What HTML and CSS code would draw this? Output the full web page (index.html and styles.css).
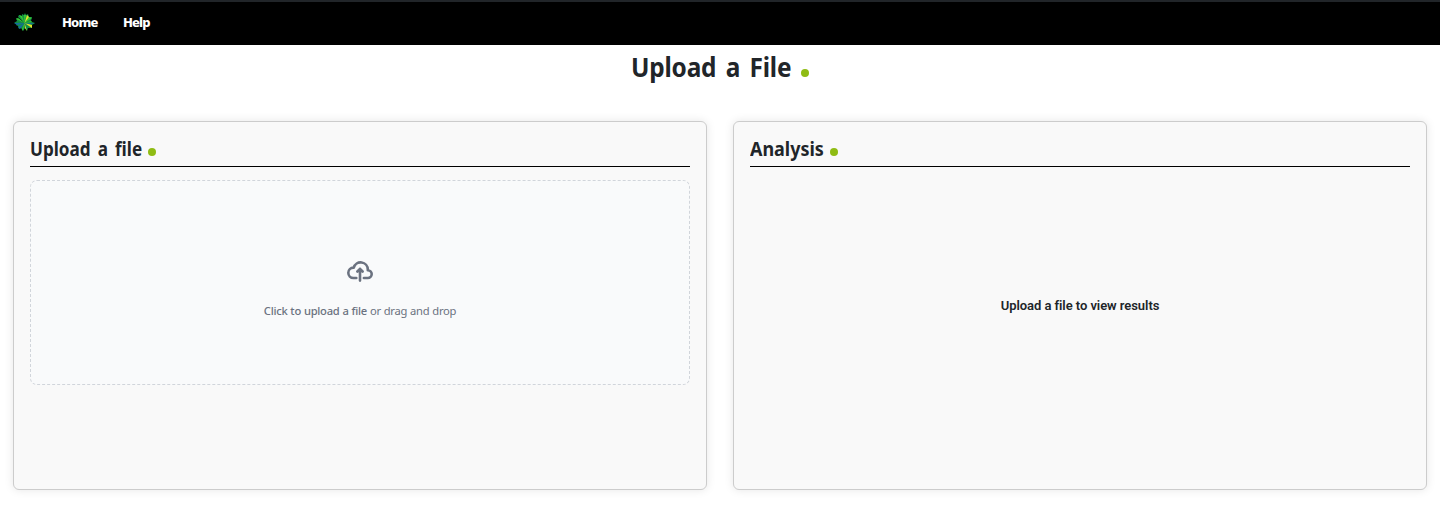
FILE: index.html
```html
<!DOCTYPE html>
<html lang="en">
<head>
<meta charset="utf-8">
<title>Upload a File</title>
<link rel="stylesheet" href="styles.css">
</head>
<body>
<nav class="navbar">
  <svg class="logo" viewBox="0 0 21 19" aria-hidden="true">
    <path fill="#138c45" d="M10.5 10 4 4 5 2 8 3 8 1 10 2 11 0 12 2 14 1 15 4 18 4 17 8 18 9 21 10 18 12 18 15 14 15 13 18 11 15 9 18 7 15 5 16 4 13 2 12 3 10 0 10 3 8 2 5 5 6Z"/>
    <path fill="#36c832" d="M10.5 10 5 2 8 3ZM10.5 10 10 2 12 2ZM10.5 10 15 4 18 5ZM10.5 10 2 6 4 5ZM10.5 10 8 16 9 18ZM10.5 10 17 8 18 9Z"/>
    <path fill="#e1e32a" d="M10.5 10 13 2 15 4ZM10.5 10 18 12 18 15ZM10.5 10 11 15 13 18Z"/>
    <path fill="#146b9d" d="M10.5 10 0 10 3 12ZM10.5 10 21 10 17 11ZM10.5 10 4 14 6 16Z"/>
  </svg>
  <a class="nav-link home">Home</a>
  <a class="nav-link">Help</a>
</nav>
<main>
  <h1 class="title"><span class="title-text">Upload a File</span><i class="dot"></i></h1>
  <div class="panels">
    <section class="panel">
      <h2 class="heading"><span class="heading-text upload">Upload a file</span><i class="dot"></i></h2>
      <div class="dropzone">
        <svg class="cloud" viewBox="0 0 20 16" fill="none" stroke="currentColor" stroke-width="2" stroke-linecap="round" stroke-linejoin="round"><path d="M13 13h3a3 3 0 0 0 0-6h-.025A5.56 5.56 0 0 0 16 6.5 5.5 5.5 0 0 0 5.207 5.021C5.137 5.017 5.071 5 5 5a4 4 0 0 0 0 8h2.167M10 15V6m0 0L8 8m2-2 2 2"/></svg>
        <p class="prompt"><span class="strong">Click to upload a file</span> or drag and drop</p>
      </div>
    </section>
    <section class="panel">
      <h2 class="heading"><span class="heading-text analysis">Analysis</span><i class="dot"></i></h2>
      <p class="empty">Upload a file to view results</p>
    </section>
  </div>
</main>
</body>
</html>
```
FILE: styles.css
```css
* { box-sizing: border-box; }
body { margin: 0; background: #fff; color: #212529; font-family: "Noto Sans", sans-serif; }
.navbar { height: 45px; background: #000; border-top: 2px solid #212529; display: flex; align-items: center; padding: 0 14px 2px; }
.logo { width: 21px; height: 19px; }
.nav-link { color: #fff; font-size: 13px; line-height: 18px; margin-top: -1px; font-weight: 800; letter-spacing: -.85px; margin-left: 25.5px; }
.nav-link.home { margin-left: 27px; }
.title { height: 45px; margin: 0; display: flex; justify-content: center; align-items: center; font-size: 27px; line-height: 43px; font-weight: 700; letter-spacing: -.2px; word-spacing: 3.5px; }
.title-text { margin: -2px -17px 0 0; transform: scaleX(.904); transform-origin: left; }
.dot { width: 8px; height: 8px; border-radius: 50%; background: #8fbc14; flex: none; }
.title .dot { margin: 11px 0 0 10px; }
.panels { display: grid; grid-template-columns: 1fr 1fr; gap: 26px; padding: 31px 13px 18px; }
.panel { height: 369px; padding: 12px 16px; border: 1px solid #ccc; border-radius: 6px; background: #f9f9f9; box-shadow: 0 0 10px rgba(0,0,0,.1); }
.heading { height: 33px; margin: 0 0 13px; border-bottom: 1px solid #000; display: flex; align-items: center; font-size: 19px; line-height: 30px; font-weight: 700; word-spacing: 3px; }
.heading-text { margin-top: -2px; transform-origin: left; }
.upload { margin-right: -13px; transform: scaleX(.9); }
.analysis { margin-right: -5px; transform: scaleX(.945); }
.heading .dot { margin: 4px 0 0 6.5px; }
.dropzone { height: 205px; border: 1px dashed #d1d5db; border-radius: 7px; background: #f9fafb; color: #6b7280; display: flex; flex-direction: column; align-items: center; padding-top: 80px; }
.cloud { width: 26px; height: 21px; }
.prompt { margin: 20px 0 0; font-size: 11.2px; line-height: 18px; letter-spacing: -.26px; word-spacing: .3px; white-space: nowrap; }
.strong { font-weight: 500; }
.empty { margin: 129px 0 0; text-align: center; font: 600 13px/20px Roboto, sans-serif; letter-spacing: -.06px; }
```
